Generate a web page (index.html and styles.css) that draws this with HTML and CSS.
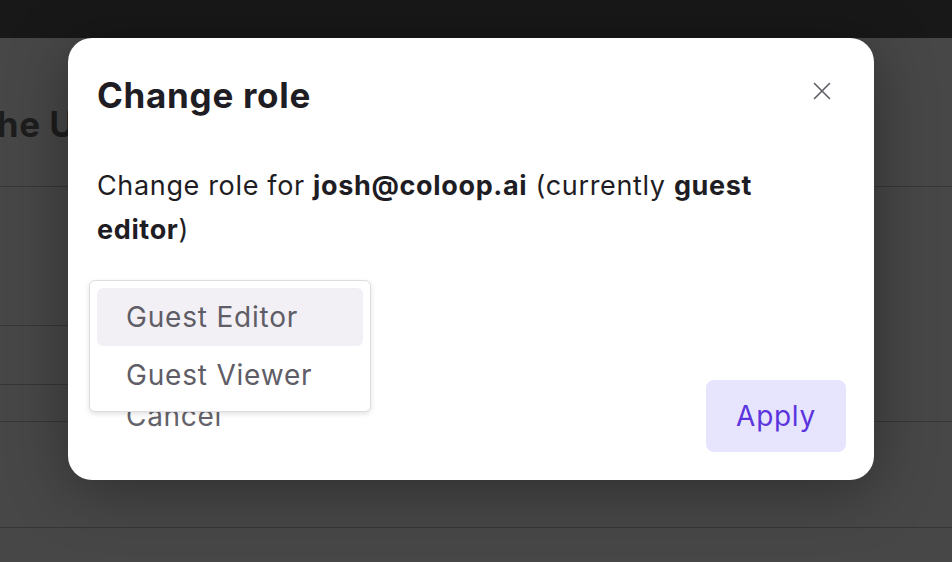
FILE: index.html
```html
<!DOCTYPE html>
<html lang="en">
<head>
    <meta charset="UTF-8">
    <meta name="viewport" content="width=device-width, initial-scale=1.0">
    <title>Change role</title>
    <link rel="stylesheet" href="styles.css">
</head>
<body>

<div class="topbar"></div>

<!-- page behind the dialog -->
<div class="page">
    <div class="page-head">
        <h1>The Users</h1>
    </div>
    <div class="group">
        <div class="cell first"></div>
        <div class="cell second"></div>
    </div>
    <div class="group big"></div>
</div>

<!-- Dialog -->
<div class="modal">
    <div class="modal-head">
        <h2>Change role</h2>
        <button class="close" aria-label="Close">
            <svg width="18" height="18" viewBox="0 0 18 18" fill="none" stroke="#5f5d66" stroke-width="1.6" stroke-linecap="round">
                <path d="M1.5 1.5 L16.5 16.5 M16.5 1.5 L1.5 16.5"/>
            </svg>
        </button>
    </div>

    <p class="modal-text">Change role for <b>josh@coloop.ai</b> (currently <b>guest editor</b>)</p>

    <div class="select-wrap">
        <div class="dropdown">
            <div class="option active">Guest Editor</div>
            <div class="option">Guest Viewer</div>
        </div>
    </div>

    <div class="modal-foot">
        <button class="btn ghost">Cancel</button>
        <button class="btn primary">Apply</button>
    </div>
</div>

</body>
</html>
```

FILE: styles.css
```css
body {
    margin: 0;
    height: 562px;
    overflow: hidden;
    font-family: "Inter", "Noto Sans", sans-serif;
    background-color: #474747;
    position: relative;
}
.topbar {
    height: 38px;
    background-color: #181818;
}
.page-head {
    height: 149px;
    border-bottom: 1px solid #363636;
    display: flex;
    align-items: center;
    box-sizing: border-box;
}
.page-head h1 {
    margin: 24px 0 0 -27px;
    font-size: 35px;
    font-weight: 700;
    letter-spacing: 0.5px;
    color: #1d1d1d;
}
.group {
    height: 235px;
    border-bottom: 1px solid #363636;
    box-sizing: border-box;
}
.cell {
    width: 80px;
    border-bottom: 1px solid #363636;
    box-sizing: border-box;
}
.first { height: 139px; }
.second { height: 59px; }
.group.big { height: 106px; }

.modal {
    position: absolute;
    left: 68px;
    top: 38px;
    width: 806px;
    height: 442px;
    box-sizing: border-box;
    padding: 28px 28px 28px 29px;
    background-color: white;
    border-radius: 24px;
    box-shadow: 0 10px 60px rgba(0, 0, 0, 0.35);
    display: flex;
    flex-direction: column;
}
.modal-head {
    display: flex;
    justify-content: space-between;
    align-items: center;
    height: 58px;
}
.modal-head h2 {
    margin: 0;
    font-size: 35px;
    font-weight: 700;
    letter-spacing: 0.7px;
    color: #1f1d24;
}
.close {
    border: none;
    background: none;
    padding: 8px;
    margin: -8px 7px 0 0;
    display: flex;
    cursor: pointer;
}
.modal-text {
    margin: 40px 0 0;
    padding-right: 12px;
    font-size: 27px;
    line-height: 44px;
    letter-spacing: 0.65px;
    color: #1f1d24;
}
.modal-text b {
    font-weight: 700;
}
.select-wrap {
    position: relative;
    flex: 1;
}
.dropdown {
    position: absolute;
    left: -8px;
    top: 28px;
    width: 282px;
    box-sizing: border-box;
    padding: 7px;
    background-color: white;
    border: 1px solid #dedde2;
    border-radius: 6px;
    box-shadow: 0 2px 5px rgba(0, 0, 0, 0.12);
    z-index: 2;
}
.option {
    height: 58px;
    display: flex;
    align-items: center;
    padding-left: 29px;
    font-size: 28px;
    letter-spacing: 0.8px;
    color: #5f5d66;
    border-radius: 6px;
}
.option.active {
    background-color: #f2f0f5;
}
.modal-foot {
    display: flex;
    justify-content: space-between;
    align-items: center;
}
.btn {
    height: 72px;
    padding: 0 29px;
    border: none;
    border-radius: 8px;
    font-family: inherit;
    font-size: 28px;
    letter-spacing: 0.7px;
    cursor: pointer;
}
.ghost {
    background: none;
    color: #64626a;
}
.primary {
    width: 140px;
    padding: 0;
    background-color: #e7e4fd;
    color: #5b34e0;
}
```
